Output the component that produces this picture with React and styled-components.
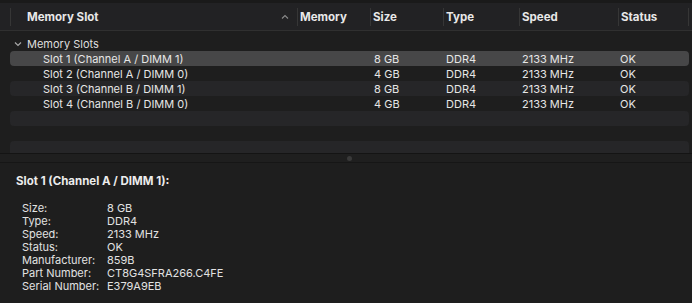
import React from "react";
import styled, { createGlobalStyle } from "styled-components";

const Global = createGlobalStyle`
  *, *::before, *::after { box-sizing: border-box; }
  html, body { margin: 0; padding: 0; background: #1e1e1e; }
  body { font-family: Inter, "Liberation Sans", sans-serif; color: #e2e2e2; font-size: 11px; -webkit-font-smoothing: antialiased; }
`;

const COLS = "287px 73px 73px 76px 99px 71px";

const Window = styled.div`
  width: 692px;
  height: 303px;
  display: flex;
  flex-direction: column;
  overflow: hidden;
  background: #1e1e1e;
`;

const Header = styled.div`
  flex: none;
  height: 31px;
  border-top: 3px solid #1a1a1a;
  border-bottom: 1px solid #303030;
  background: #222224;
  display: grid;
  grid-template-columns: ${COLS};
  padding-left: 10px;
  align-items: center;
`;

const HeadCell = styled.div`
  position: relative;
  height: 18px;
  display: flex;
  align-items: center;
  padding-left: ${(p) => p.$pad || 2}px;
  border-left: 1px solid #363636;
  font-weight: 700;
  font-size: 11.5px;
  color: #e8e8e8;
  ${(p) => p.$last && `border-right: 1px solid #363636;`}
`;

const SortArrow = styled.svg`
  position: absolute;
  right: 8px;
  top: 6px;
`;

const List = styled.div`
  flex: none;
  height: 122px;
  padding-top: 5px;
  overflow: hidden;
`;

const GroupRow = styled.div`
  height: 15px;
  display: flex;
  align-items: center;
  padding-left: 14px;
  gap: 5px;
  color: #dedede;
`;

const Row = styled.div`
  height: 15px;
  margin: 0 3px 0 10px;
  border-radius: 4px;
  display: grid;
  grid-template-columns: ${COLS};
  align-items: center;
  background: ${(p) => (p.$selected ? "#474748" : p.$alt ? "#262628" : "transparent")};
  color: #e6e6e6;
`;

const Cell = styled.div`
  padding-left: ${(p) => p.$pad || 3}px;
  white-space: nowrap;
`;

const Splitter = styled.div`
  flex: none;
  height: 10px;
  border-top: 1px solid #141414;
  border-bottom: 1px solid #161616;
  background: #1f1f1f;
  display: flex;
  align-items: center;
  justify-content: center;
`;

const Dot = styled.div`
  width: 5px;
  height: 5px;
  border-radius: 50%;
  background: #3a3a3a;
  margin-left: 6px;
`;

const Detail = styled.div`
  flex: 1;
  background: #1e1e1e;
  padding: 12px 0 0 16px;
`;

const DetailTitle = styled.div`
  font-weight: 700;
  font-size: 11.5px;
  height: 13px;
  line-height: 13px;
  margin-bottom: 14px;
  color: #ececec;
`;

const Props = styled.div`
  display: grid;
  grid-template-columns: 85px auto;
  padding-left: 6px;
  line-height: 13px;
`;

const Chevron = () => (
  <svg width="8" height="6" viewBox="0 0 8 6">
    <path d="M1 1.5 L4 4.5 L7 1.5" fill="none" stroke="#a8a8a8" strokeWidth="1.2" />
  </svg>
);

const slots = [
  ["Slot 1 (Channel A / DIMM 1)", "8 GB"],
  ["Slot 2 (Channel A / DIMM 0)", "4 GB"],
  ["Slot 3 (Channel B / DIMM 1)", "8 GB"],
  ["Slot 4 (Channel B / DIMM 0)", "4 GB"],
];

const details = [
  ["Size:", "8 GB"],
  ["Type:", "DDR4"],
  ["Speed:", "2133 MHz"],
  ["Status:", "OK"],
  ["Manufacturer:", "859B"],
  ["Part Number:", "CT8G4SFRA266.C4FE"],
  ["Serial Number:", "E379A9EB"],
];

export default function App() {
  return (
    <Window>
      <Global />
      <Header>
        <HeadCell $pad={16}>
          Memory Slot
          <SortArrow width="8" height="6" viewBox="0 0 8 6">
            <path d="M1 4.5 L4 1.5 L7 4.5" fill="none" stroke="#8a8a8a" strokeWidth="1.1" />
          </SortArrow>
        </HeadCell>
        <HeadCell>Memory</HeadCell>
        <HeadCell>Size</HeadCell>
        <HeadCell>Type</HeadCell>
        <HeadCell>Speed</HeadCell>
        <HeadCell $last>Status</HeadCell>
      </Header>
      <List>
        <GroupRow>
          <Chevron />
          Memory Slots
        </GroupRow>
        {slots.map(([name, size], i) => (
          <Row key={name} $selected={i === 0} $alt={i % 2 === 0}>
            <Cell $pad={33}>{name}</Cell>
            <Cell />
            <Cell $pad={4}>{size}</Cell>
            <Cell>{"DDR4"}</Cell>
            <Cell>{"2133 MHz"}</Cell>
            <Cell $pad={2}>OK</Cell>
          </Row>
        ))}
        <Row $alt />
        <Row />
        <Row $alt />
      </List>
      <Splitter>
        <Dot />
      </Splitter>
      <Detail>
        <DetailTitle>Slot 1 (Channel A / DIMM 1):</DetailTitle>
        <Props>
          {details.map(([k, v]) => (
            <React.Fragment key={k}>
              <div>{k}</div>
              <div>{v}</div>
            </React.Fragment>
          ))}
        </Props>
      </Detail>
    </Window>
  );
}
